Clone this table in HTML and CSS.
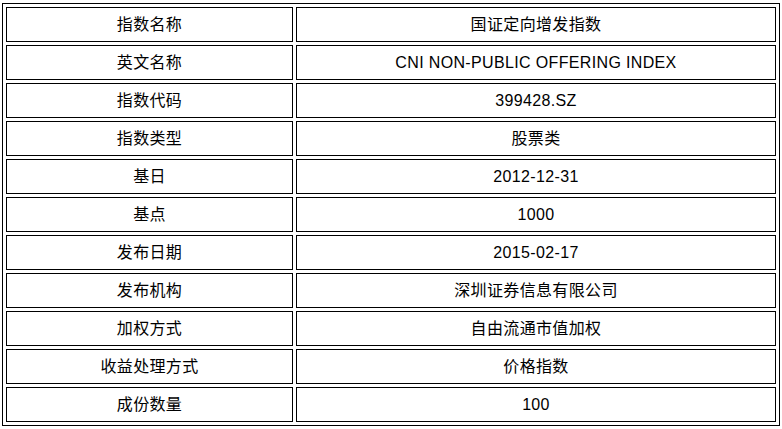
FILE: index.html
```html
<!DOCTYPE html>
<html lang="zh-CN">
<head>
<meta charset="utf-8">
<title>指数信息</title>
<link rel="stylesheet" href="styles.css">
</head>
<body>
<table class="info">
  <tbody>
    <tr><td class="k">指数名称</td><td class="v">国证定向增发指数</td></tr>
    <tr><td class="k">英文名称</td><td class="v">CNI NON-PUBLIC OFFERING INDEX</td></tr>
    <tr><td class="k">指数代码</td><td class="v">399428.SZ</td></tr>
    <tr><td class="k">指数类型</td><td class="v">股票类</td></tr>
    <tr><td class="k">基日</td><td class="v">2012-12-31</td></tr>
    <tr><td class="k">基点</td><td class="v">1000</td></tr>
    <tr><td class="k">发布日期</td><td class="v">2015-02-17</td></tr>
    <tr><td class="k">发布机构</td><td class="v">深圳证券信息有限公司</td></tr>
    <tr><td class="k">加权方式</td><td class="v">自由流通市值加权</td></tr>
    <tr><td class="k">收益处理方式</td><td class="v">价格指数</td></tr>
    <tr><td class="k">成份数量</td><td class="v">100</td></tr>
  </tbody>
</table>
</body>
</html>
```
FILE: styles.css
```css
html, body {
  margin: 0;
  padding: 0;
  background: #fff;
}
body {
  padding: 3px 0 0 2px;
  font-family: "Liberation Sans", "Noto Sans CJK SC", sans-serif;
  font-size: 16px;
  color: #000;
}
.info {
  border: 1px solid #000;
  border-collapse: separate;
  border-spacing: 3px;
  table-layout: fixed;
  width: 778px;
}
.info td {
  border: 1px solid #000;
  height: 33px;
  padding: 0;
  text-align: center;
  vertical-align: middle;
  line-height: 20px;
  letter-spacing: 0.35px;
}
.info td.k {
  width: 285px;
}
.info td.v {
  width: 478px;
}
```
